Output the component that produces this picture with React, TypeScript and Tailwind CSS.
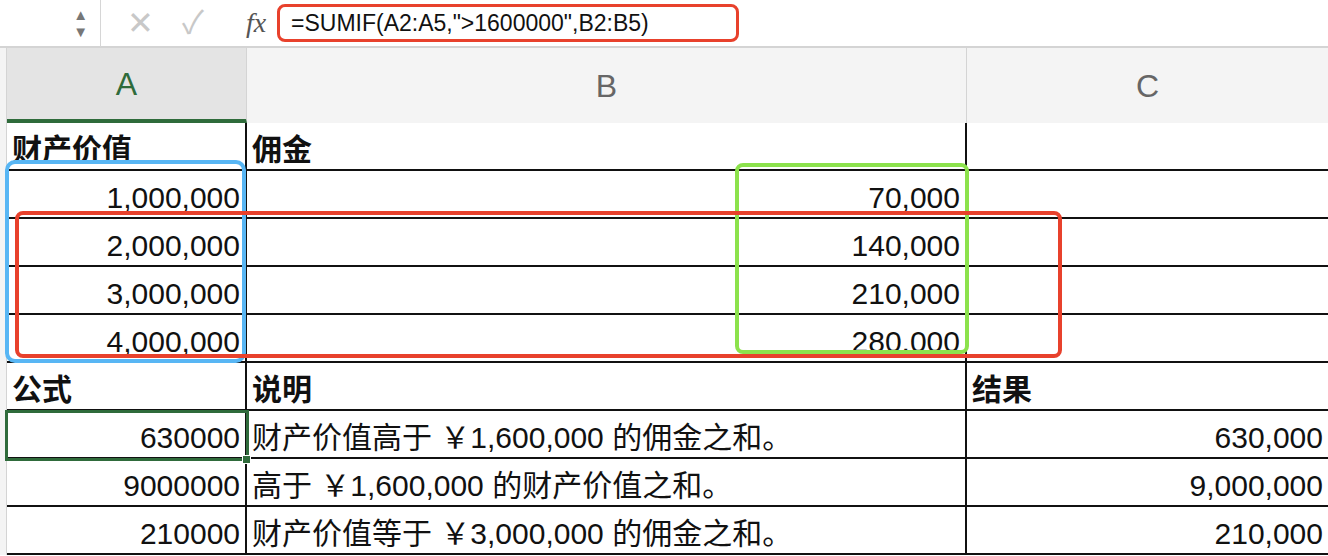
import React from 'react';

const font = { fontFamily: '"Liberation Sans", Arial, "Noto Sans CJK SC", sans-serif' };

type Cell = { t: string; b?: boolean; r?: boolean };

const rows: Cell[][] = [
  [{ t: '财产价值', b: true }, { t: '佣金', b: true }, { t: '' }],
  [{ t: '1,000,000', r: true }, { t: '70,000', r: true }, { t: '' }],
  [{ t: '2,000,000', r: true }, { t: '140,000', r: true }, { t: '' }],
  [{ t: '3,000,000', r: true }, { t: '210,000', r: true }, { t: '' }],
  [{ t: '4,000,000', r: true }, { t: '280,000', r: true }, { t: '' }],
  [{ t: '公式', b: true }, { t: '说明', b: true }, { t: '结果', b: true }],
  [{ t: '630000', r: true }, { t: '财产价值高于 ￥1,600,000 的佣金之和。' }, { t: '630,000', r: true }],
  [{ t: '9000000', r: true }, { t: '高于 ￥1,600,000 的财产价值之和。' }, { t: '9,000,000', r: true }],
  [{ t: '210000', r: true }, { t: '财产价值等于 ￥3,000,000 的佣金之和。' }, { t: '210,000', r: true }],
];

export default function App() {
  return (
    <div className="relative w-[1328px] h-[556px] overflow-hidden bg-white text-[#111]" style={font}>
      {/* formula bar */}
      <div className="flex items-center h-[48px] border-b-2 border-[#d4d4d4]">
        <div className="w-[100px] flex flex-col items-end pr-[12px] text-[#777] text-[15px] leading-[17px]">
          <span>▲</span>
          <span>▼</span>
        </div>
        <div className="h-[48px] w-px bg-[#d6d6d6]" />
        <div className="flex items-center gap-[28px] pl-[26px] text-[32px] text-[#c8c8c8] w-[145px]">
          <span>✕</span>
          <span>✓</span>
        </div>
        <span className="italic text-[28px] text-[#555] w-[30px]" style={{ fontFamily: '"Liberation Serif", serif' }}>fx</span>
        <div className="h-[30px] w-px bg-[#ccc] ml-[2px]" />
        <span className="ml-[12px] text-[23px]">=SUMIF(A2:A5,"&gt;1600000",B2:B5)</span>
      </div>
      {/* column headers */}
      <div className="flex h-[75px] bg-[#f4f4f4] text-[32px]">
        <div className="w-[7px] border-r border-[#d4d4d4]" />
        <div className="w-[240px] flex items-center justify-center bg-[#e4e4e4] text-[#2f6b3b] border-b-4 border-[#2f6b3b] border-r border-r-[#d4d4d4]">A</div>
        <div className="w-[720px] flex items-center justify-center text-[#666] border-r border-[#d4d4d4]">B</div>
        <div className="flex-1 flex items-center justify-center text-[#666]">C</div>
      </div>
      {/* grid */}
      <div className="flex">
        <div className="w-[7px] bg-[#f4f4f4] border-r border-[#d4d4d4]" />
        <div className="grid grid-cols-[240px_720px_1fr] flex-1 text-[30px]">
          {rows.map((row, i) =>
            row.map((c, j) => (
              <div
                key={`${i}-${j}`}
                className={`h-[48px] border-b-2 border-[#111] flex items-end pb-[1px] px-[5px] leading-[36px] ${j < 2 ? 'border-r-2' : ''} ${c.r ? 'justify-end' : ''} ${c.b ? 'font-bold' : ''}`}
              >
                {c.t}
              </div>
            ))
          )}
        </div>
      </div>
      {/* overlays */}
      <div className="absolute left-[277px] top-[4px] w-[462px] h-[38px] border-[3px] border-[#e8412c] rounded-[8px]" />
      <div className="absolute left-[5px] top-[160px] w-[241px] h-[203px] border-[4px] border-[#58b6f4] rounded-[10px]" />
      <div className="absolute left-[735px] top-[163px] w-[234px] h-[191px] border-[4px] border-[#8ce24c] rounded-[8px]" />
      <div className="absolute left-[15px] top-[211px] w-[1047px] h-[147px] border-[4px] border-[#e8412c] rounded-[8px]" />
      <div className="absolute left-[5px] top-[410px] w-[244px] h-[51px] border-[3px] border-[#2f6b3b]" />
      <div className="absolute left-[242px] top-[455px] w-[9px] h-[9px] bg-[#2f6b3b] border border-white" />
    </div>
  );
}
